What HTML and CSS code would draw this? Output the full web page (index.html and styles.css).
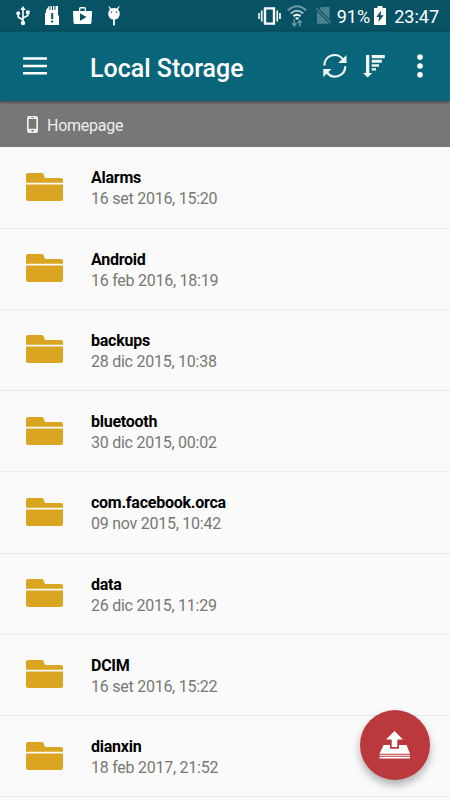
FILE: index.html
```
<!DOCTYPE html>
<html lang="it">
<head>
<meta charset="utf-8">
<title>Local Storage</title>
<link rel="stylesheet" href="styles.css">
</head>
<body>
<svg class="defs" aria-hidden="true">
  <symbol id="folder" viewBox="0 0 37 28">
    <path d="M0 9.8V2Q0 0 2 0H16Q17.2 0 17.6 1.2L19 5H35Q37 5 37 7V9.8Z"/>
    <path d="M0 11.4H37V26Q37 28 35 28H2Q0 28 0 26Z"/>
  </symbol>
</svg>
<div class="screen">
  <div class="status">
    <div class="notices">
      <svg width="14" height="20" viewBox="0 0 14 20"><path d="M7 3V17M7 14L2.2 11V7.5M7 12L11.8 9.5V6" fill="none" stroke="#fff" stroke-width="1.6"/><path d="M7 0L9.7 4H4.3ZM10 4.5h3.6v3.6H10Z"/><circle cx="2.2" cy="7.2" r="1.9"/><circle cx="7" cy="17" r="2.2"/></svg>
      <svg width="14" height="20" viewBox="0 0 14 20"><path fill-rule="evenodd" d="M4 0H13V9L14 10V19H0V7H1V4ZM6.2 7V13H8.2V7ZM6.2 14.5V16.6H8.2V14.5Z"/><path d="M5 0V4M7.5 0V4M10 0V4" stroke="#075365" stroke-width="1"/></svg>
      <svg width="19" height="17" viewBox="0 0 19 17"><path fill-rule="evenodd" d="M0 4H6V1.5Q6 0 7.5 0H11.5Q13 0 13 1.5V4H19L18.5 15.5Q18.4 17 17 17H2Q.6 17 .5 15.5ZM7.3 4H11.7V1.4H7.3ZM7 6.2V14L13.5 10Z"/></svg>
      <svg width="14" height="20" viewBox="0 0 14 20"><path d="M2 0L4.2 2.6Q7 1.4 9.8 2.6L12 0L12.6.5L11 3.5Q13 5 12.8 8Q12.3 13.7 7 13.7T1.2 8Q1 5 3 3.5L1.4.5ZM6.1 13H7.9V19Q7 20 6.1 19Z"/><circle cx="4.5" cy="6" r=".8" fill="#075365"/><circle cx="9.5" cy="6" r=".8" fill="#075365"/></svg>
    </div>
    <div class="system">
      <svg class="vibrate" width="23" height="18" viewBox="0 0 23 18"><path d="M7 1.4H16V16.6H7Z" fill="none" stroke="#fff" stroke-width="2.4"/><path d="M3.7 3.5V14.5M1 6V12M19.3 3.5V14.5M22 6V12" stroke="#fff" stroke-width="1.6"/></svg>
      <svg class="wifi" width="20" height="22" viewBox="0 0 20 22"><g fill="none" stroke-width="2"><path d="M.8 5.5Q10-3 19.2 5.5" stroke="#6d9ba6"/><path d="M3.8 8.6Q10 3 16.2 8.6" stroke="#a5c2c9"/><path d="M6.5 11.2Q10 8.2 13.5 11.2" stroke="#fff"/></g><path d="M8 13Q10 11.5 12 13L10 15Z"/><path d="M7.3 14.5V19M12.7 21.5V17" stroke="#6d9ba6" stroke-width="1.6"/><path fill="#6d9ba6" d="M4.3 18.3H10.3L7.3 22ZM9.9 18H15.5L12.7 14.5Z"/></svg>
      <svg class="sim" width="15" height="17" viewBox="0 0 15 17"><path fill="#4b8290" d="M5 0H13.5V12L3.5 2ZM1 4.5L13.2 16.7H1Z"/><path d="M0 1L15 16" stroke="#4b8290" stroke-width="1.3"/></svg>
      <span class="percent">91%</span>
      <svg class="battery" width="12" height="19" viewBox="0 0 12 19"><path fill-rule="evenodd" d="M0 2H3.5V0H8.5V2H12V19H0ZM7.2 4.5L2.3 11H5.2L4.4 16L9.8 9.2H6.6Z"/></svg>
      <span class="clock">23:47</span>
    </div>
  </div>
  <header class="toolbar">
    <svg class="menu" width="24" height="18" viewBox="0 0 24 18"><path d="M0 1.5H24M0 9H24M0 16.3H24" stroke="#fff" stroke-width="2.4"/></svg>
    <h1>Local Storage</h1>
    <svg class="refresh" width="24" height="24" viewBox="0 0 24 24"><path d="M1.4 11.5A10.2 10.2 0 0 1 20 5.5M22.3 12.2A10.2 10.2 0 0 1 4 18.5" fill="none" stroke="#f0f5f6" stroke-width="2.2"/><path fill="#f0f5f6" d="M23.5 1V9H15.2ZM.3 23V15H8.5Z"/></svg>
    <svg class="sort" width="22" height="23" viewBox="0 0 22 23"><path fill="#f0f5f6" d="M3 0H6.3V18H9.3L4.6 22.5L0 18H3ZM8.7 0H21.8V3.2H8.7ZM8.7 4.8H18.8V7.8H8.7ZM8.7 9.2H16V11.8H8.7ZM8.7 13.2H13V15.6H8.7Z"/></svg>
    <svg class="more" width="6" height="24" viewBox="0 0 6 24"><circle cx="3" cy="3.1" r="2.8"/><circle cx="3" cy="12" r="2.8"/><circle cx="3" cy="20.8" r="2.8"/></svg>
  </header>
  <nav class="path">
    <svg width="11" height="17" viewBox="0 0 11 17"><path fill="#eee" fill-rule="evenodd" d="M2 0H9Q11 0 11 2V15Q11 17 9 17H2Q0 17 0 15V2Q0 0 2 0ZM1.7 3V12.7H9.3V3ZM4 1.2V1.9H7V1.2ZM4.5 14V15.7H6.5V14Z"/></svg>
    <span>Homepage</span>
  </nav>
  <main class="list">
    <div class="row"><svg class="folder"><use href="#folder"/></svg><div><h2>Alarms</h2><p>16 set 2016, 15:20</p></div></div>
    <div class="row"><svg class="folder"><use href="#folder"/></svg><div><h2>Android</h2><p>16 feb 2016, 18:19</p></div></div>
    <div class="row"><svg class="folder"><use href="#folder"/></svg><div><h2>backups</h2><p>28 dic 2015, 10:38</p></div></div>
    <div class="row"><svg class="folder"><use href="#folder"/></svg><div><h2>bluetooth</h2><p>30 dic 2015, 00:02</p></div></div>
    <div class="row"><svg class="folder"><use href="#folder"/></svg><div><h2>com.facebook.orca</h2><p>09 nov 2015, 10:42</p></div></div>
    <div class="row"><svg class="folder"><use href="#folder"/></svg><div><h2>data</h2><p>26 dic 2015, 11:29</p></div></div>
    <div class="row"><svg class="folder"><use href="#folder"/></svg><div><h2>DCIM</h2><p>16 set 2016, 15:22</p></div></div>
    <div class="row"><svg class="folder"><use href="#folder"/></svg><div><h2>dianxin</h2><p>18 feb 2017, 21:52</p></div></div>
  </main>
  <button class="fab" aria-label="Upload">
    <svg width="32" height="28" viewBox="0 0 32 28"><path d="M15.5 0L24 8.5H18.3V16H12.7V8.5H7Z"/><path d="M4.5 14H11V17.8H20V14H27.5L31 22.8H.5ZM.5 23.7H31V24.7H.5ZM.5 25.7H31V27.5H.5Z"/></svg>
  </button>
</div>
</body>
</html>
```
FILE: styles.css
```
* { box-sizing: border-box; }
body { margin: 0; font-family: Roboto, sans-serif; }
svg { display: block; flex: none; fill: #fff; }
h1, h2, p { margin: 0; white-space: nowrap; }
.defs { position: absolute; width: 0; height: 0; }
.screen { position: relative; width: 450px; height: 800px; overflow: hidden; background: #fafafa; }

.status { display: flex; justify-content: space-between; height: 31px; padding: 0 11px 0 16px; background: #075365; color: #fff; font-size: 18px; }
.notices, .system { display: flex; align-items: center; }
.notices { gap: 14.5px; }
.percent { margin-left: 6px; }
.battery { margin-left: 5px; }
.clock { margin-left: 8px; font-size: 18px; }
.wifi { margin-left: 6px; }
.sim { margin-left: 9px; }
.percent, .clock { line-height: 31px; padding-top: 1px; }
.percent { margin-right: -1px; }
.clock { margin-right: 0; }

.toolbar { position: relative; display: flex; align-items: center; height: 70px; padding: 0 27px 0 23px; background: #09667a; box-shadow: 0 1px 3px rgba(0, 0, 0, .5), inset 0 1px 1px rgba(0, 0, 0, .2); color: #fff; }
h1 { flex: 1; margin: 5px 0 0 43px; font-size: 25px; font-weight: 500; line-height: 32px; }
.sort { margin-left: 16px; }
.more { margin-left: 32px; }

.path { display: flex; align-items: center; gap: 9px; height: 46.4px; padding: 0 0 0 27px; background: #777; color: #eee; font-size: 16px; letter-spacing: -.25px; }
.path span { padding-top: 2px; }

.row { display: flex; gap: 28px; height: 81.25px; padding: 20px 0 0 26px; border-bottom: 1.5px solid #eaeaea; }
.folder { width: 37px; height: 28px; margin-top: 5.6px; fill: #daa520; }
h2 { color: #000; font-size: 16px; font-weight: 700; line-height: 21px; letter-spacing: -.25px; }
p { color: #777872; font-size: 16px; line-height: 22px; letter-spacing: -.25px; }

.fab { position: absolute; left: 360px; top: 710px; display: grid; place-items: center; width: 70px; height: 70px; padding: 0; border: 0; border-radius: 50%; background: #bb393c; box-shadow: 0 5px 9px rgba(0, 0, 0, .3); }
```
